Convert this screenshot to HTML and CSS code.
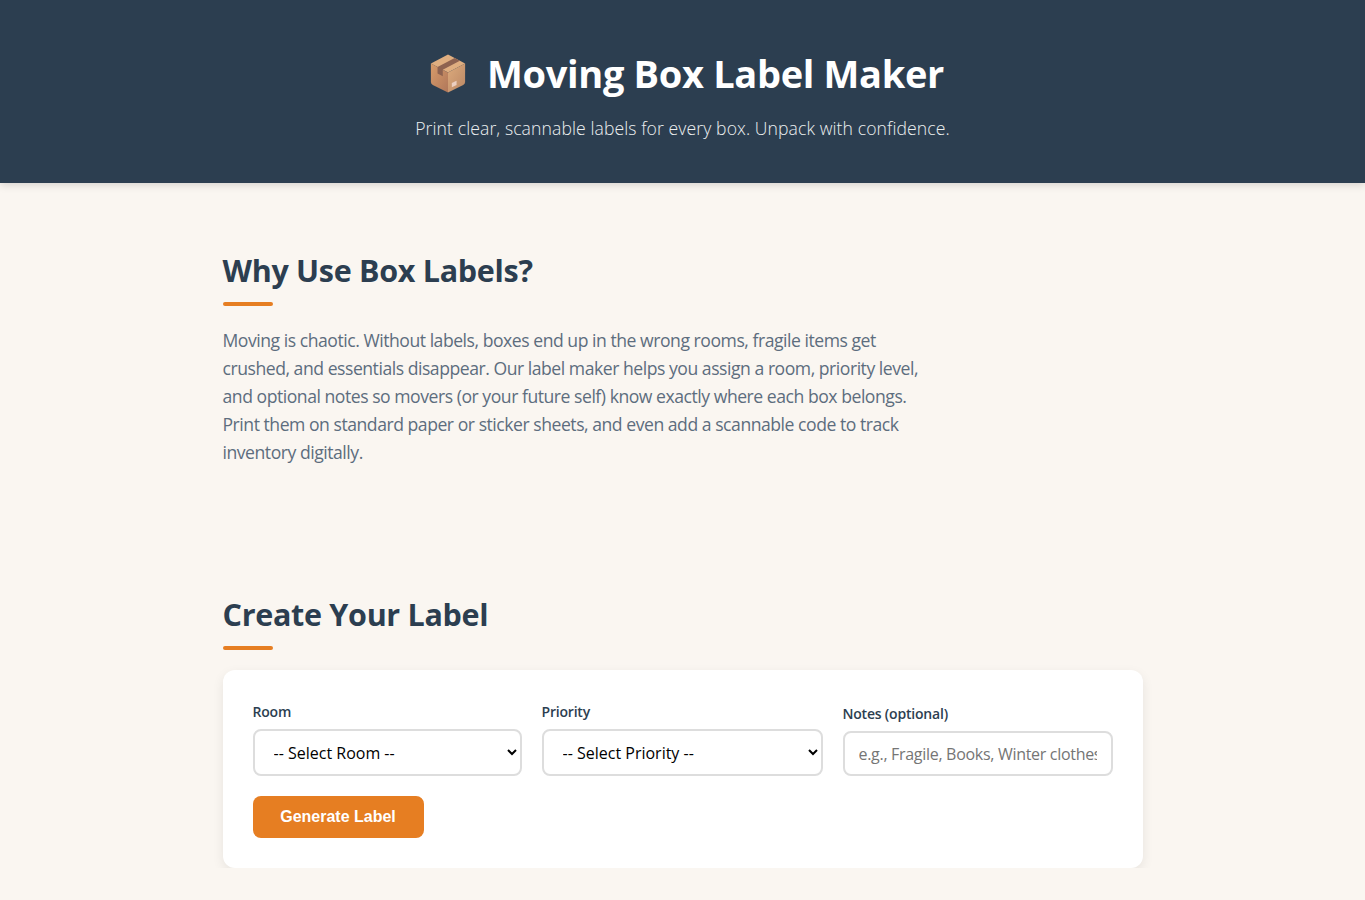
FILE: index.html
```html
<!DOCTYPE html>
<html lang="en">
<head>
  <meta charset="UTF-8">
  <meta name="viewport" content="width=device-width, initial-scale=1.0">
  <title>Moving Box Label Maker</title>
  <link rel="stylesheet" href="styles.css">
</head>
<body>
  <header class="site-header">
    <h1 class="site-title">
      <svg class="box-icon" viewBox="0 0 40 42" aria-hidden="true">
        <defs>
          <linearGradient id="boxLeft" x1="0" y1="0" x2="1" y2="1">
            <stop offset="0" stop-color="#d89c6a"/>
            <stop offset="1" stop-color="#b0775a"/>
          </linearGradient>
          <linearGradient id="boxRight" x1="0" y1="0" x2="1" y2="1">
            <stop offset="0" stop-color="#dcaa7c"/>
            <stop offset="1" stop-color="#bb8865"/>
          </linearGradient>
        </defs>
        <path d="M20 1 38 10.500 20 20 2 10.500Z" fill="#dfae80"/>
        <path d="M2 10.500 20 20V41L4 33Q2 32 2 30Z" fill="url(#boxLeft)"/>
        <path d="M38 10.500 20 20V41L36 33Q38 32 38 30Z" fill="url(#boxRight)"/>
        <path d="M27 4.700 9 14.200V21L14.500 23.800V17L32.500 7.600Z" fill="#8d6250"/>
        <path d="M24 31 29 28.500V33L24 35.500Z" fill="#eccfc0"/>
      </svg>
      <span>Moving Box Label Maker</span>
    </h1>
    <p class="tagline">Print clear, scannable labels for every box. Unpack with confidence.</p>
  </header>

  <main class="container">
    <section class="intro">
      <h2 class="section-title">Why Use Box Labels?</h2>
      <p class="intro-text">Moving is chaotic. Without labels, boxes end up in the wrong rooms, fragile items get crushed, and essentials disappear. Our label maker helps you assign a room, priority level, and optional notes so movers (or your future self) know exactly where each box belongs. Print them on standard paper or sticker sheets, and even add a scannable code to track inventory digitally.</p>
    </section>

    <section class="maker">
      <h2 class="section-title">Create Your Label</h2>
      <form class="card">
        <div class="fields">
          <div class="field">
            <label for="room">Room</label>
            <select id="room">
              <option>-- Select Room --</option>
            </select>
          </div>
          <div class="field">
            <label for="priority">Priority</label>
            <select id="priority">
              <option>-- Select Priority --</option>
            </select>
          </div>
          <div class="field">
            <label for="notes">Notes (optional)</label>
            <input id="notes" type="text" placeholder="e.g., Fragile, Books, Winter clothes">
          </div>
        </div>
        <button class="generate" type="button">Generate Label</button>
      </form>
    </section>
  </main>
</body>
</html>
```

FILE: styles.css
```css
* {
  box-sizing: border-box;
}

body {
  margin: 0;
  font-family: "Open Sans", "Noto Sans", sans-serif;
  background-color: #faf6f1;
  color: #2c3e50;
}

.site-header {
  height: 183px;
  padding-top: 47px;
  text-align: center;
  background-color: #2c3e50;
  color: #fff;
  box-shadow: 0 2px 8px rgba(0, 0, 0, 0.15);
}

.site-title {
  display: flex;
  justify-content: center;
  align-items: center;
  gap: 20px;
  margin: 0;
  padding-left: 8px;
  height: 52px;
  font-size: 38px;
  font-weight: 700;
  letter-spacing: -0.33px;
}

.box-icon {
  width: 38px;
  height: 41px;
}

.tagline {
  margin: 17px 0 0;
  font-size: 17.6px;
  font-weight: 300;
  line-height: 24px;
  color: #ecf0f1;
  letter-spacing: 0.09px;
}

.container {
  width: 920px;
  margin: 0 auto;
}

.intro {
  padding-top: 64px;
}

.section-title {
  position: relative;
  margin: 0 0 19px;
  padding-bottom: 14px;
  font-size: 30.5px;
  line-height: 46px;
  font-weight: 700;
  letter-spacing: -0.3px;
}

.section-title::after {
  content: "";
  position: absolute;
  left: 0;
  bottom: 1px;
  width: 50px;
  height: 4px;
  border-radius: 2px;
  background-color: #e67e22;
}

.intro-text {
  margin: 0;
  width: 700px;
  font-size: 17.6px;
  line-height: 28px;
  color: #5d6d7e;
  letter-spacing: -0.47px;
}

.maker {
  margin-top: 125px;
}

.card {
  padding: 30px;
  background-color: #fff;
  border-radius: 12px;
  box-shadow: 0 4px 12px rgba(0, 0, 0, 0.08);
}

.fields {
  display: grid;
  grid-template-columns: 269px 281px 270px;
  gap: 20px;
  align-items: end;
  margin-bottom: 20px;
  padding-top: 2px;
}

.field label {
  display: block;
  margin-bottom: 7px;
  font-size: 14px;
  line-height: 20px;
  font-weight: 600;
  letter-spacing: -0.2px;
}

.field select,
.field input {
  display: block;
  width: 100%;
  border: 2px solid #ddd;
  border-radius: 8px;
  background-color: #fff;
  font-family: inherit;
  font-size: 16px;
}

.field select {
  height: 47px;
  padding: 0 15px;
  color: #000;
}

.field input {
  height: 45px;
  padding: 0 14px;
  letter-spacing: -0.3px;
}

.generate {
  display: block;
  width: 171px;
  height: 42px;
  border: none;
  border-radius: 8px;
  background-color: #e67e22;
  color: #fff;
  font-family: "Liberation Sans", Arial, sans-serif;
  font-size: 16px;
  font-weight: 700;
  cursor: pointer;
}
```
